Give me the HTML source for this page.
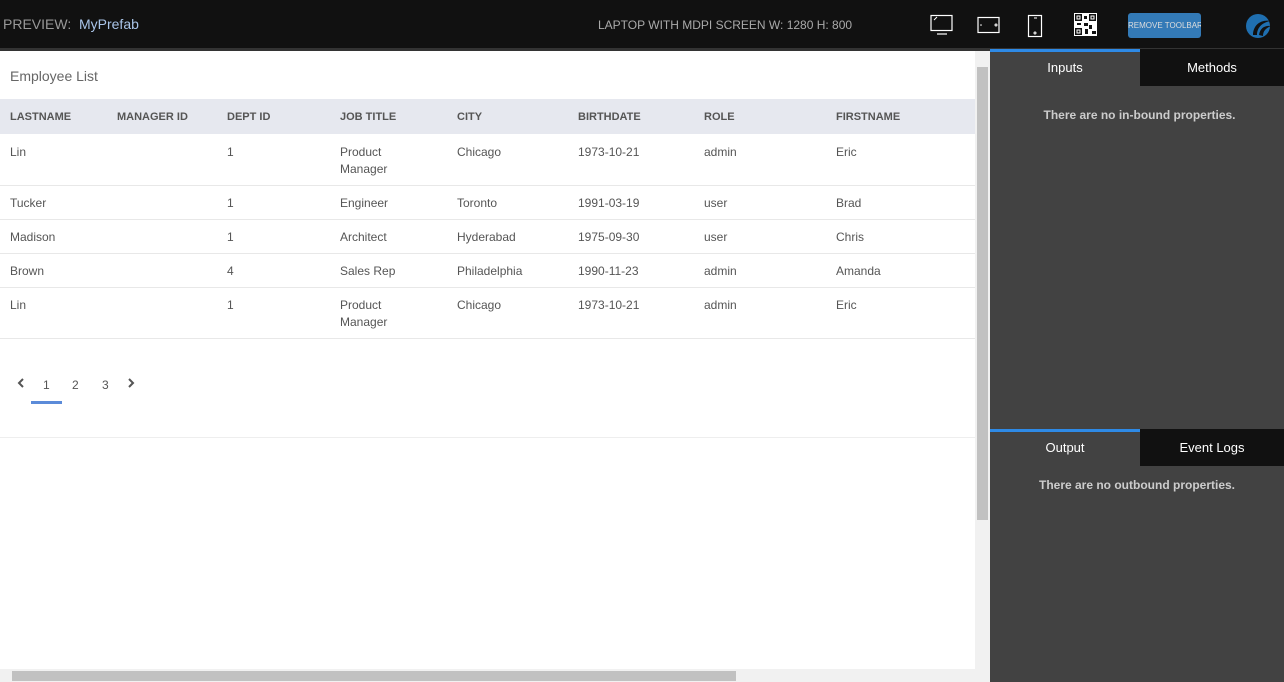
<!DOCTYPE html><html><head><style>
body{margin:0;width:1284px;height:682px;overflow:hidden;position:relative;font-family:"Liberation Sans",sans-serif;background:#fff}
.a{position:absolute}
.top{left:0;top:0;width:1284px;height:48px;background:#111}
.h{font-size:11px;font-weight:bold;color:#555;top:111px}
.c{font-size:12px;color:#555;line-height:17px}
.tab{font-size:13px;color:#fff;text-align:center;line-height:37px;height:37px}
</style></head><body>
<div class="a top"></div>
<div class="a" style="left:3px;top:16px;font-size:14px;color:#999">PREVIEW:&nbsp; <span style="color:#a9c4e8">MyPrefab</span></div>
<div class="a" style="left:598px;top:18px;font-size:12px;color:#aaa">LAPTOP WITH MDPI SCREEN W: 1280 H: 800</div>
<svg class="a" style="left:930px;top:14px" width="24" height="22"><rect x="1" y="1.5" width="21" height="15" fill="none" stroke="#fff" stroke-width="1.2"/><line x1="4" y1="6" x2="7" y2="3" stroke="#fff"/><line x1="7" y1="20" x2="17" y2="20" stroke="#fff" stroke-width="1.2"/></svg>
<svg class="a" style="left:977px;top:16px" width="24" height="20"><rect x="1" y="1.5" width="21" height="15" fill="none" stroke="#fff" stroke-width="1.2"/><circle cx="4" cy="9" r=".8" fill="#fff"/><circle cx="19" cy="9" r="1" fill="none" stroke="#fff"/></svg>
<svg class="a" style="left:1027px;top:14px" width="16" height="24"><rect x="1.5" y="1.5" width="13" height="21" fill="none" stroke="#fff" stroke-width="1.2"/><line x1="7" y1="4" x2="10" y2="4" stroke="#fff"/><circle cx="8" cy="19" r="1" fill="none" stroke="#fff"/></svg>
<svg class="a" style="left:1074px;top:13px" width="23" height="23"><rect width="23" height="23" fill="#fff"/><g fill="#111"><rect x="1" y="1" width="7" height="7"/><rect x="15" y="1" width="7" height="7"/><rect x="1" y="15" width="7" height="7"/><rect x="10" y="3" width="3" height="3"/><rect x="10" y="10" width="4" height="3"/><rect x="15" y="12" width="3" height="4"/><rect x="18" y="18" width="4" height="3"/><rect x="11" y="16" width="3" height="5"/><rect x="3" y="10" width="4" height="2"/></g><g fill="#fff"><rect x="2.5" y="2.5" width="4" height="4"/><rect x="16.5" y="2.5" width="4" height="4"/><rect x="2.5" y="16.5" width="4" height="4"/></g><g fill="#111"><rect x="3.5" y="3.5" width="2" height="2"/><rect x="17.5" y="3.5" width="2" height="2"/><rect x="3.5" y="17.5" width="2" height="2"/></g></svg>
<div class="a" style="left:1128px;top:13px;width:73px;height:25px;background:#337ab7;border-radius:3px;color:#ddd;font-size:8px;line-height:25px;text-align:center;white-space:nowrap;overflow:hidden">REMOVE TOOLBAR</div>
<svg class="a" style="left:1245px;top:13px" width="26" height="26"><circle cx="13" cy="13" r="12" fill="#1f6fb0"/><path d="M8 22 C8 12 16 6 26 8 C18 9 12 14 12 22 Z M14 22 C15 15 20 12 26 13 C21 15 18 18 18 23 Z" fill="#111"/></svg>
<div class="a" style="left:0;top:48px;width:990px;height:3px;background:#333"></div>
<div class="a" style="left:10px;top:68px;font-size:14px;color:#666">Employee List</div>
<div class="a" style="left:0;top:99px;width:975px;height:35px;background:#e6e8ef"></div>
<div class="a h" style="left:10px">LASTNAME</div><div class="a h" style="left:117px">MANAGER ID</div><div class="a h" style="left:227px">DEPT ID</div><div class="a h" style="left:340px">JOB TITLE</div><div class="a h" style="left:457px">CITY</div><div class="a h" style="left:578px">BIRTHDATE</div><div class="a h" style="left:704px">ROLE</div><div class="a h" style="left:836px">FIRSTNAME</div>
<div class="a" style="left:0;top:185px;width:975px;height:1px;background:#e8e8e8"></div>
<div class="a" style="left:0;top:219px;width:975px;height:1px;background:#e8e8e8"></div>
<div class="a" style="left:0;top:253px;width:975px;height:1px;background:#e8e8e8"></div>
<div class="a" style="left:0;top:287px;width:975px;height:1px;background:#e8e8e8"></div>
<div class="a" style="left:0;top:338px;width:975px;height:1px;background:#e8e8e8"></div>
<div class="a" style="left:0;top:437px;width:975px;height:1px;background:#eee"></div>
<div class="a c" style="left:10px;top:144px">Lin</div><div class="a c" style="left:10px;top:195px">Tucker</div><div class="a c" style="left:10px;top:229px">Madison</div><div class="a c" style="left:10px;top:263px">Brown</div><div class="a c" style="left:10px;top:297px">Lin</div>
<div class="a c" style="left:227px;top:144px">1</div><div class="a c" style="left:227px;top:195px">1</div><div class="a c" style="left:227px;top:229px">1</div><div class="a c" style="left:227px;top:263px">4</div><div class="a c" style="left:227px;top:297px">1</div>
<div class="a c" style="left:340px;top:144px">Product<br>Manager</div><div class="a c" style="left:340px;top:195px">Engineer</div><div class="a c" style="left:340px;top:229px">Architect</div><div class="a c" style="left:340px;top:263px">Sales Rep</div><div class="a c" style="left:340px;top:297px">Product<br>Manager</div>
<div class="a c" style="left:457px;top:144px">Chicago</div><div class="a c" style="left:457px;top:195px">Toronto</div><div class="a c" style="left:457px;top:229px">Hyderabad</div><div class="a c" style="left:457px;top:263px">Philadelphia</div><div class="a c" style="left:457px;top:297px">Chicago</div>
<div class="a c" style="left:578px;top:144px">1973-10-21</div><div class="a c" style="left:578px;top:195px">1991-03-19</div><div class="a c" style="left:578px;top:229px">1975-09-30</div><div class="a c" style="left:578px;top:263px">1990-11-23</div><div class="a c" style="left:578px;top:297px">1973-10-21</div>
<div class="a c" style="left:704px;top:144px">admin</div><div class="a c" style="left:704px;top:195px">user</div><div class="a c" style="left:704px;top:229px">user</div><div class="a c" style="left:704px;top:263px">admin</div><div class="a c" style="left:704px;top:297px">admin</div>
<div class="a c" style="left:836px;top:144px">Eric</div><div class="a c" style="left:836px;top:195px">Brad</div><div class="a c" style="left:836px;top:229px">Chris</div><div class="a c" style="left:836px;top:263px">Amanda</div><div class="a c" style="left:836px;top:297px">Eric</div>
<svg class="a" style="left:16px;top:377px" width="10" height="12"><path d="M7 2 L3 6 L7 10" fill="none" stroke="#555" stroke-width="2"/></svg>
<div class="a c" style="left:43px;top:377px">1</div><div class="a c" style="left:72px;top:377px">2</div><div class="a c" style="left:102px;top:377px">3</div>
<svg class="a" style="left:126px;top:377px" width="10" height="12"><path d="M3 2 L7 6 L3 10" fill="none" stroke="#555" stroke-width="2"/></svg>
<div class="a" style="left:31px;top:401px;width:31px;height:3px;background:#5b8bd9"></div>
<div class="a" style="left:975px;top:51px;width:15px;height:631px;background:#f1f1f1"></div>
<div class="a" style="left:977px;top:67px;width:11px;height:453px;background:#c1c1c1"></div>
<div class="a" style="left:0;top:669px;width:975px;height:13px;background:#f1f1f1"></div>
<div class="a" style="left:12px;top:671px;width:724px;height:10px;background:#c1c1c1"></div>
<div class="a" style="left:990px;top:48px;width:294px;height:634px;background:#424242"></div>
<div class="a" style="left:990px;top:48px;width:294px;height:2px;background:#333"></div>
<div class="a" style="left:990px;top:49px;width:150px;height:3px;background:#2e8ae6"></div>
<div class="a tab" style="left:990px;top:49px;width:150px">Inputs</div>
<div class="a tab" style="left:1140px;top:49px;width:144px;background:#111">Methods</div>
<div class="a" style="left:990px;top:108px;width:299px;text-align:center;font-size:12px;font-weight:bold;color:#ccc">There are no in-bound properties.</div>
<div class="a" style="left:990px;top:429px;width:150px;height:3px;background:#2e8ae6"></div>
<div class="a tab" style="left:990px;top:429px;width:150px">Output</div>
<div class="a tab" style="left:1140px;top:429px;width:144px;background:#111">Event Logs</div>
<div class="a" style="left:990px;top:478px;width:294px;text-align:center;font-size:12px;font-weight:bold;color:#ccc">There are no outbound properties.</div>
</body></html>
